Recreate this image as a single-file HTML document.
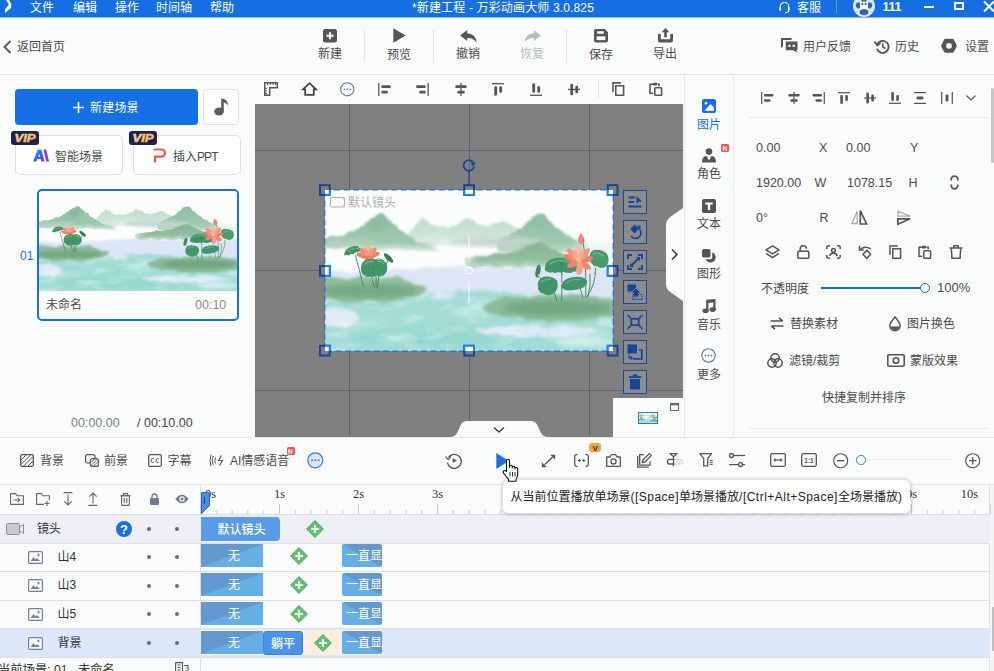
<!DOCTYPE html>
<html lang="zh-CN">
<head>
<meta charset="utf-8">
<title>万彩动画大师</title>
<style>
*{box-sizing:border-box;margin:0;padding:0}
html,body{width:994px;height:671px;overflow:hidden;background:#fafcfc}
body{position:relative;font-family:"Liberation Sans","Noto Sans CJK SC",sans-serif;font-size:12px;color:#444;line-height:1}
.abs,.t,.ic{position:absolute}
.t{white-space:nowrap;line-height:14px;height:14px}
svg{position:absolute;overflow:visible}
/* title bar */
#titlebar{position:absolute;left:0;top:0;width:994px;height:18px;background:linear-gradient(#166fe2 17px,#8ab6f0 17px);color:#fff;overflow:hidden}
#titlebar .t{color:#fff;font-size:12px}
/* toolbar */
#toolbar{position:absolute;left:0;top:18px;width:994px;height:57px;background:#fafcfc;border-bottom:1px solid #e4e7ea}
.vsep{position:absolute;width:1px;background:#e3e5e8}
/* left panel */
#left{position:absolute;left:0;top:75px;width:255px;height:362px;background:#fafcfc}
/* canvas */
#ctool{position:absolute;left:255px;top:75px;width:428px;height:28px;background:#fafcfc}
#canvas{position:absolute;left:255px;top:103px;width:428px;height:334px;background:#808080;overflow:hidden}
.gl{position:absolute;background:#636363}
.hd{position:absolute;width:11px;height:11px;border:2px solid #1d58b8}
.hd.m{border-color:#2a7be6;background:#fff}
.sb{position:absolute;left:368px;width:24px;height:24px;border:1px solid #1b4a9c;background:#8b8c8e}
/* right */
#tabs{position:absolute;left:683px;top:75px;width:51px;height:362px;background:#fafcfc;border-right:1px solid #e6e9ec}
#props{position:absolute;left:734px;top:75px;width:260px;height:362px;background:#fafcfc}
.tab{position:absolute;left:0;width:50px;text-align:center;font-size:12px;color:#555}
/* timeline */
#tl{position:absolute;left:0;top:437px;width:994px;height:234px;background:#fafcfc}
.row{position:absolute;left:0;width:990px;border-bottom:1px solid #dcdfe3}
.blk{position:absolute;height:23px;color:#fff;font-size:12px;text-align:center;line-height:25px;overflow:hidden;white-space:nowrap}
.ls{letter-spacing:.48px}
.dot{position:absolute;width:4px;height:4px;border-radius:50%;background:#666}
</style>
</head>
<body>
<svg width="0" height="0" style="left:0;top:0"><defs>
<filter id="wc" x="-10%" y="-10%" width="120%" height="120%"><feTurbulence type="fractalNoise" baseFrequency="0.09" numOctaves="2" seed="4" result="n"/><feDisplacementMap in="SourceGraphic" in2="n" scale="5" xChannelSelector="R" yChannelSelector="G"/><feGaussianBlur stdDeviation=".9"/></filter>
<filter id="wc2" x="-10%" y="-10%" width="120%" height="120%"><feTurbulence type="fractalNoise" baseFrequency="0.06" numOctaves="2" seed="9" result="n"/><feDisplacementMap in="SourceGraphic" in2="n" scale="8" xChannelSelector="R" yChannelSelector="G"/><feGaussianBlur stdDeviation="1.800"/></filter>
<filter id="b2" x="-20%" y="-20%" width="140%" height="140%"><feGaussianBlur stdDeviation="2.400"/></filter>
<filter id="b3" x="-30%" y="-30%" width="160%" height="160%"><feGaussianBlur stdDeviation="4"/></filter>
<filter id="b0" x="-10%" y="-10%" width="120%" height="120%"><feGaussianBlur stdDeviation=".4"/></filter>
<filter id="lf" x="-10%" y="-10%" width="120%" height="120%"><feTurbulence type="fractalNoise" baseFrequency="0.25" numOctaves="1" seed="2" result="n"/><feDisplacementMap in="SourceGraphic" in2="n" scale="2.200" xChannelSelector="R" yChannelSelector="G"/><feGaussianBlur stdDeviation=".35"/></filter>
<linearGradient id="mg" x1="0" y1="0" x2="0" y2="1"><stop offset="0" stop-color="#8cbe9e"/><stop offset=".75" stop-color="#9fc9ae"/><stop offset="1" stop-color="#bfdccb"/></linearGradient>
<linearGradient id="mg2" x1="0" y1="0" x2="0" y2="1"><stop offset="0" stop-color="#bcdccb"/><stop offset=".7" stop-color="#cfe6da"/><stop offset="1" stop-color="#eaf4ef"/></linearGradient>
<linearGradient id="mg3" x1="0" y1="0" x2="0" y2="1"><stop offset="0" stop-color="#84b492"/><stop offset=".7" stop-color="#93bfa1"/><stop offset="1" stop-color="#c5dccf"/></linearGradient>
<filter id="tx" x="0" y="0" width="100%" height="100%"><feTurbulence type="fractalNoise" baseFrequency="0.03 0.07" numOctaves="3" seed="11"/><feColorMatrix type="matrix" values="0 0 0 0 0.93  0 0 0 0 0.97  0 0 0 0 0.98  0 0 0 2.200 -1.050"/></filter>
<clipPath id="pc"><rect width="288" height="161"/></clipPath>
<symbol id="paint" viewBox="0 0 288 161" preserveAspectRatio="none">
<g clip-path="url(#pc)">
<rect width="288" height="161" fill="#fbfdfc"/>
<!-- distant pale mountains -->
<path d="M80 50 L88 38 L97 26 L105 33 L114 36 L124 38 L134 33 L143 29 L152 34 L162 36 L170 32 L177 31 L186 36 L198 40 L212 48 L212 54 L80 56Z" fill="url(#mg2)" filter="url(#wc)"/>
<!-- right mountain -->
<path d="M172 52 L186 44 L198 37 L208 28 L214 24 L219 24 L224 30 L231 37 L240 43 L250 49 L262 56 L262 62 L172 62Z" fill="url(#mg)" filter="url(#wc)"/>
<!-- left mountain -->
<path d="M-6 50 L10 47 L26 42 L38 35 L48 27 L54 23 L58 23 L63 29 L71 36 L80 43 L92 51 L104 57 L114 62 L60 60 L-6 58Z" fill="url(#mg)" filter="url(#wc)"/>
<ellipse cx="52" cy="36" rx="7" ry="5" fill="#7fb392" opacity=".55" filter="url(#b2)"/>
<!-- grey mist bands -->
<ellipse cx="172" cy="52" rx="46" ry="5" fill="#c6d6d0" opacity=".95" filter="url(#b2)"/>
<ellipse cx="22" cy="53" rx="30" ry="4" fill="#b4d0c0" opacity=".9" filter="url(#b2)"/>
<ellipse cx="96" cy="56" rx="16" ry="3" fill="#a9cbb7" opacity=".9" filter="url(#b2)"/>
<!-- near hill right -->
<path d="M140 68 L156 66 L170 64 L186 62 L198 58 L208 54 L215 52 L222 56 L232 61 L244 66 L254 72 L258 78 L140 78Z" fill="url(#mg3)" filter="url(#wc)"/>
<!-- white mist -->
<ellipse cx="60" cy="68" rx="90" ry="8" fill="#fbfdfc" filter="url(#b3)"/>
<ellipse cx="272" cy="60" rx="22" ry="7" fill="#eef2f4" filter="url(#b3)"/>
<!-- lavender band -->
<path d="M-10 82 L60 80 L120 77 L200 78 L300 74 L300 112 L-10 112Z" fill="#dce6f6" filter="url(#wc2)"/>
<!-- water -->
<path d="M-10 112 L40 110 L96 106 L130 100 L170 102 L300 108 L300 175 L-10 175Z" fill="#a2ddd5" filter="url(#wc2)"/>
<ellipse cx="120" cy="148" rx="100" ry="9" fill="#93d8cf" opacity=".8" filter="url(#b3)"/>
<ellipse cx="212" cy="141" rx="62" ry="6" fill="#dde8f6" filter="url(#wc2)"/>
<ellipse cx="10" cy="128" rx="22" ry="11" fill="#e0e9f6" filter="url(#wc2)"/>
<ellipse cx="118" cy="105" rx="12" ry="4" fill="#e0e9f7" filter="url(#b2)"/>
<ellipse cx="262" cy="152" rx="30" ry="5" fill="#c9ecea" filter="url(#b2)"/>
<rect x="0" y="104" width="288" height="57" filter="url(#tx)" opacity=".55"/>
<!-- left shore -->
<ellipse cx="34" cy="99" rx="68" ry="13" fill="#8fbd9c" filter="url(#wc2)"/>
<ellipse cx="44" cy="101" rx="48" ry="7" fill="#72a782" opacity=".9" filter="url(#b2)"/>
<!-- right shore -->
<ellipse cx="230" cy="118" rx="72" ry="13" fill="#8cbb99" filter="url(#wc2)"/>
<ellipse cx="232" cy="118" rx="54" ry="7.500" fill="#70a580" opacity=".9" filter="url(#b2)"/>
<!-- left lotus -->
<g filter="url(#lf)">
<path d="M30.300 65 Q35 82 38.500 96.500 M46.500 84 Q47 92 49.500 97.500 M51 82 L51.200 97.500 M54 82 Q53.500 92 52.500 97.500 M63 70 Q60 76 58 82" stroke="#3f7f55" stroke-width=".9" fill="none"/>
<path d="M19 65.500 Q19.500 58 28 56.200 Q35.500 55.500 37 61 Q34 60.500 32.500 62.500 Q30 61.800 28.500 64.200 Q25.500 63 24 65.500 Q21.500 64.500 19 65.500Z" fill="#3f9464"/>
<path d="M22 62 Q27 57.500 34 58.500" stroke="#63b082" stroke-width="1.200" fill="none"/>
<path d="M36 80 Q35 71 43.500 68.500 Q48 67.500 50 69.500 Q53.500 67.300 57 69.500 Q62.500 72 62.300 78.500 Q62 84 57 86 Q54 87 52 85.500 Q49 87.500 45 86.500 Q42 88 39.500 85.500 Q36.500 84 36 80Z" fill="#43966a"/>
<path d="M40 74 Q44 70 48.500 72 M52 71.500 Q56 70.500 59 74" stroke="#69b589" stroke-width="1.500" fill="none"/>
<path d="M49.500 70 L48.500 85 M50 76 L41 81 M52 76 L59 82" stroke="#2f7a4b" stroke-width=".6" opacity=".6" fill="none"/>
<ellipse cx="63.5" cy="68" rx="6.2" ry="2.3" transform="rotate(45 63.5 68)" fill="#2d7d4c"/>
<ellipse cx="36.5" cy="65.5" rx="2.2" ry="5.2" transform="rotate(-68 36.5 65.5)" fill="#f08068"/><ellipse cx="49.8" cy="65" rx="2.2" ry="5.2" transform="rotate(66 49.8 65)" fill="#f08068"/><ellipse cx="38.6" cy="62.5" rx="2.6" ry="5.6" transform="rotate(-38 38.6 62.5)" fill="#f28d76"/><ellipse cx="47.6" cy="62.2" rx="2.6" ry="5.6" transform="rotate(36 47.6 62.2)" fill="#f28d76"/><ellipse cx="43" cy="60.6" rx="3.3" ry="6" transform="rotate(0 43 60.6)" fill="#f7b7a6"/><ellipse cx="41" cy="62.5" rx="2" ry="4.6" transform="rotate(-16 41 62.5)" fill="#f59c88"/><ellipse cx="45.2" cy="62.5" rx="2" ry="4.6" transform="rotate(16 45.2 62.5)" fill="#f59c88"/><ellipse cx="43" cy="67.2" rx="6" ry="1.8" transform="rotate(0 43 67.2)" fill="#ef7a64"/>
</g>
<!-- right lotus -->
<g filter="url(#lf)">
<path d="M258.300 54 Q260.500 66 260.500 78 Q261 94 260.800 108 M236.800 80 L236.800 111 M226.500 97 Q230 103 231.700 111 M270.500 78 Q271 94 261.500 107.500 M255 98 Q257 103 257.700 108 M213 86 Q216 90 221 92 M265 84 Q266 96 263 107" stroke="#3f7f55" stroke-width=".9" fill="none"/>
<path d="M219.700 79 Q220 70 230 68.300 Q238 67 245 69.500 Q252.500 72 252.500 79.500 Q250.500 82.500 248 81.500 Q246 84 243 82.500 Q240.500 83.500 238.500 81.500 Q236 83.800 233 82 Q230 84.200 227.500 82 Q224.500 83.500 222.500 81.500 Q220 82 219.700 79Z" fill="#41956a"/>
<path d="M224 74.500 Q230 70 237 70.500 Q244 70.500 249 75" stroke="#66b386" stroke-width="1.600" fill="none"/>
<path d="M236.800 72 L236.800 82 M236.800 74 L226 80 M236.800 74 L247 80" stroke="#2f7a4b" stroke-width=".6" opacity=".6" fill="none"/>
<path d="M264.500 66 Q265 60 271 59.700 Q278 59.500 282 64 Q284.500 68 283 73 Q281.500 77.500 277.500 77.800 Q274.500 78.500 272.500 76.500 Q269 77 267 74 Q264 71 264.500 66Z" fill="#4a9b6c"/>
<path d="M268 64 Q273 61.500 279 66" stroke="#6fb98e" stroke-width="1.400" fill="none"/>
<path d="M212.700 95 Q213 88 220 86.500 Q227 85.800 231.500 90 Q234 94 232 99 Q230 104 225 105 Q221 106 218.500 103.500 Q214.500 103 213.300 99.500Z" fill="#41956a"/>
<path d="M216 92 Q220 88.500 226 89.500" stroke="#66b386" stroke-width="1.400" fill="none"/>
<path d="M236.500 95 Q238 89 246 87.500 Q253 85.800 259 88 Q262.500 89.500 262 92.500 Q261 96.500 256 98.500 Q251 100.500 246 100.300 Q241 101 238 99 Q236 97.500 236.500 95Z" fill="#40936a"/>
<path d="M241 93 Q247 89 255 89.500" stroke="#66b386" stroke-width="1.300" fill="none"/>
<ellipse cx="213" cy="81" rx="2.4" ry="6.6" transform="rotate(12 213 81)" fill="#3a8a56"/>
<path d="M255.500 43.200 Q259.500 46 259.300 51 Q258 55 255 54.300 Q251 50.500 255.500 43.200Z" fill="#f08a78"/><path d="M258.800 48 Q260.300 51 258.500 54.500 Q257.500 52 258.800 48Z" fill="#5aa060"/>
<ellipse cx="245.5" cy="68" rx="3" ry="7" transform="rotate(-70 245.5 68)" fill="#f0806a"/><ellipse cx="262" cy="69.5" rx="3" ry="6.5" transform="rotate(72 262 69.5)" fill="#f0806a"/><ellipse cx="247.5" cy="64.5" rx="3.2" ry="7.5" transform="rotate(-40 247.5 64.5)" fill="#f39480"/><ellipse cx="259.5" cy="64.5" rx="3.2" ry="7.5" transform="rotate(38 259.5 64.5)" fill="#f39480"/><ellipse cx="253.5" cy="62.5" rx="3.8" ry="7.5" transform="rotate(0 253.5 62.5)" fill="#f8bcab"/><ellipse cx="250.8" cy="65.5" rx="2.4" ry="6" transform="rotate(-18 250.8 65.5)" fill="#f6a593"/><ellipse cx="256.4" cy="65.5" rx="2.4" ry="6" transform="rotate(18 256.4 65.5)" fill="#f6a593"/><ellipse cx="248" cy="74" rx="3" ry="6.5" transform="rotate(-118 248 74)" fill="#f1856f"/><ellipse cx="260" cy="75.5" rx="3" ry="6.5" transform="rotate(118 260 75.5)" fill="#f1856f"/><ellipse cx="254.5" cy="79" rx="3.2" ry="6" transform="rotate(8 254.5 79)" fill="#f59e8b"/><ellipse cx="253.300" cy="69.500" rx="2.600" ry="1.900" fill="#f0c070"/>
</g>
</g>
</symbol>
</defs></svg>
<!-- TITLE BAR -->
<div id="titlebar">
<svg style="left:0;top:0" width="14" height="14" viewBox="0 0 14 14"><path d="M6 0 L9 0 L11.200 3.700 L11.200 7.800 L5.100 13 L5.100 9 L8.900 4.800Z" fill="#fff"/></svg>
<div class="t" style="left:30px;top:1px">文件</div>
<div class="t" style="left:73px;top:1px">编辑</div>
<div class="t" style="left:115px;top:1px">操作</div>
<div class="t" style="left:156px;top:1px">时间轴</div>
<div class="t" style="left:210px;top:1px">帮助</div>
<div class="t" style="left:412px;top:1px;letter-spacing:.15px">*新建工程 - 万彩动画大师 3.0.825</div>
<svg style="left:778px;top:1px" width="13" height="13" viewBox="0 0 13 13" fill="none" stroke="#fff" stroke-width="1.1"><path d="M2.2 8 V5.8 A4.3 4.3 0 0 1 10.8 5.8 V8"/><rect x="1.3" y="6.3" width="1.8" height="3.4" rx=".8" fill="#fff" stroke="none"/><rect x="9.9" y="6.3" width="1.8" height="3.4" rx=".8" fill="#fff" stroke="none"/><path d="M10.8 9.5 Q10.6 11.6 7.2 11.8"/></svg>
<div class="t" style="left:797px;top:1px">客服</div>
<div class="abs" style="left:836px;top:0;width:1px;height:13px;background:#5d9bee"></div>
<svg style="left:853px;top:-5px" width="22" height="22" viewBox="0 0 22 22"><circle cx="11" cy="11" r="11" fill="#dfe9f7"/><ellipse cx="11" cy="10" rx="4.2" ry="5" fill="#f4f7fb"/><path d="M2.5 10 Q4 6 7 8 L7 13 Q4 15 2.5 10Z M19.5 10 Q18 6 15 8 L15 13 Q18 15 19.5 10Z" fill="#2d63c7"/><path d="M6.5 16 Q11 12 15.500 16 L15 19 Q11 21 7 19Z" fill="#3a5fae"/><circle cx="9.300" cy="9" r="1" fill="#39424f"/><circle cx="12.700" cy="9" r="1" fill="#39424f"/><path d="M8 5.500 Q11 3 14 5.500 L13 7 Q11 6 9 7Z" fill="#5b6c8c"/></svg>
<div class="t" style="left:882.500px;top:0;font-size:12.500px;font-weight:bold;letter-spacing:-.3px">111</div>
<div class="abs" style="left:924px;top:6px;width:10px;height:2px;background:#fff"></div>
<div class="abs" style="left:954px;top:2px;width:10px;height:8px;border:2px solid #fff"></div>
<svg style="left:983px;top:1px" width="12" height="11" viewBox="0 0 12 11" stroke="#fff" stroke-width="2" fill="none"><path d="M1 0.500 L11 10.500 M11 0.500 L1 10.500"/></svg>
</div>
<!-- TOOLBAR -->
<div id="toolbar">
<svg style="left:3px;top:22px" width="9" height="14" viewBox="0 0 9 14" fill="none" stroke="#555" stroke-width="1.8"><path d="M7.500 1 L1.500 7 L7.500 13"/></svg>
<div class="t" style="left:17px;top:22px;color:#4a4a4a">返回首页</div>
<!-- 新建 -->
<svg style="left:323px;top:11px" width="14" height="14" viewBox="0 0 14 14"><rect x="0" y="0" width="14" height="13.5" rx="2.2" fill="#555"/><path d="M7 3.300 V10.200 M3.500 6.750 H10.500" stroke="#fff" stroke-width="1.900"/></svg>
<div class="t" style="left:318px;top:29px;color:#4a4a4a">新建</div>
<div class="vsep" style="left:364px;top:12px;height:32px"></div>
<!-- 预览 -->
<svg style="left:393px;top:10px" width="13" height="15" viewBox="0 0 13 15"><path d="M0.300 0.300 L12.700 7.500 L0.300 14.700Z" fill="#555"/></svg>
<div class="t" style="left:387px;top:30px;color:#4a4a4a">预览</div>
<div class="vsep" style="left:433px;top:12px;height:32px"></div>
<!-- 撤销 -->
<svg style="left:460px;top:12px" width="17" height="13" viewBox="0 0 17 13"><path d="M7.200 0 L7.200 3.200 Q15.500 3.400 16.800 12.800 Q13.500 7.600 7.200 7.900 L7.200 11 L0 5.500Z" fill="#555"/></svg>
<div class="t" style="left:456px;top:29px;color:#4a4a4a">撤销</div>
<!-- 恢复 -->
<svg style="left:524px;top:12px" width="17" height="13" viewBox="0 0 17 13"><path d="M9.800 0 L9.800 3.200 Q1.500 3.400 0.200 12.800 Q3.500 7.600 9.800 7.900 L9.800 11 L17 5.500Z" fill="#b9bfc0"/></svg>
<div class="t" style="left:520px;top:29px;color:#b4bbbb">恢复</div>
<div class="vsep" style="left:566px;top:12px;height:32px"></div>
<!-- 保存 -->
<svg style="left:594px;top:11px" width="14" height="14" viewBox="0 0 14 14"><path d="M2 0 H10.800 L14 3.200 V11.500 A2 2 0 0 1 12 13.500 H2 A2 2 0 0 1 0 11.500 V2 A2 2 0 0 1 2 0Z" fill="#555"/><rect x="3.200" y="2.200" width="6.600" height="2.600" fill="#fafcfc"/><rect x="2.600" y="7.300" width="8.800" height="3.800" fill="#fafcfc"/></svg>
<div class="t" style="left:589px;top:30px;color:#4a4a4a">保存</div>
<!-- 导出 -->
<svg style="left:658px;top:10px" width="15" height="15" viewBox="0 0 15 15"><path d="M0 6 H2.800 V11.200 H12.200 V6 H15 V12.500 A2 2 0 0 1 13 14.500 H2 A2 2 0 0 1 0 12.500Z" fill="#555"/><path d="M7.500 0 L11.300 4.200 H8.800 V9.300 H6.200 V4.200 H3.700Z" fill="#555"/></svg>
<div class="t" style="left:653px;top:29px;color:#4a4a4a">导出</div>
<!-- 用户反馈 -->
<svg style="left:781px;top:20px" width="17" height="15" viewBox="0 0 17 15"><path d="M0 0 H10.500 V2 H2 V8.500 L0 10.300Z" fill="#555"/><path d="M4.800 3.600 H16.500 V12.200 H15 L16.500 14.800 L12 12.200 H4.800Z" fill="#555"/><rect x="7.300" y="6.800" width="2.200" height="2.100" fill="#fafcfc"/><rect x="11.600" y="6.800" width="2.200" height="2.100" fill="#fafcfc"/></svg>
<div class="t" style="left:803px;top:22px;color:#4a4a4a">用户反馈</div>
<!-- 历史 -->
<svg style="left:874px;top:21px" width="16" height="15" viewBox="0 0 16 15" fill="none" stroke="#555" stroke-width="1.900"><path d="M3.300 5.200 A6 6 0 1 1 3 9.800"/><path d="M0.400 2.600 L3.400 6.400 L6.600 3.600" stroke-width="1.700"/><path d="M8.800 4.200 V7.800 L11.300 9.600" stroke-width="1.600"/></svg>
<div class="t" style="left:895px;top:22px;color:#4a4a4a">历史</div>
<!-- 设置 -->
<svg style="left:941px;top:20px" width="16" height="16" viewBox="0 0 16 16"><path d="M4.600 0.800 H11.400 Q12.300 0.800 12.800 1.600 L15.600 6.900 Q16.100 7.800 15.600 8.700 L12.800 14 Q12.300 14.800 11.400 14.800 H4.600 Q3.700 14.800 3.200 14 L0.400 8.700 Q-0.100 7.800 0.400 6.900 L3.200 1.600 Q3.700 0.800 4.600 0.800Z" fill="#555"/><circle cx="8" cy="7.800" r="2.900" fill="#fafcfc"/></svg>
<div class="t" style="left:965px;top:22px;color:#4a4a4a">设置</div>
</div>
<!-- LEFT PANEL -->
<div id="left">
<div class="abs" style="left:15px;top:14px;width:183px;height:36px;border-radius:4px;background:#156fe5"></div>
<svg style="left:73px;top:27px" width="11" height="11" viewBox="0 0 11 11" stroke="#fff" stroke-width="1.600"><path d="M5.500 0 V11 M0 5.500 H11"/></svg>
<div class="t" style="left:90px;top:26px;color:#fff;letter-spacing:.2px">新建场景</div>
<div class="abs" style="left:203px;top:14px;width:36px;height:36px;border:1px solid #dcdfe2;border-radius:4px;background:#fcfdfd"></div>
<svg style="left:214px;top:23px" width="15" height="18" viewBox="0 0 15 18"><ellipse cx="5" cy="13.500" rx="4.800" ry="4" fill="#5a5c60"/><path d="M7.200 13.500 V0.600 Q13.500 1 14.200 7.200 Q11.500 4.600 9.800 4.600 V13.500Z" fill="#5a5c60"/></svg>
<!-- vip buttons -->
<div class="abs" style="left:15px;top:60px;width:108px;height:40px;border:1px solid #dcdfe2;border-radius:5px;background:#fcfdfd"></div>
<div class="abs" style="left:133px;top:60px;width:108px;height:40px;border:1px solid #dcdfe2;border-radius:5px;background:#fcfdfd"></div>
<svg style="left:11px;top:56px" width="28" height="14" viewBox="0 0 28 14"><defs><linearGradient id="vg" x1="0" y1="0" x2="1" y2="1"><stop offset="0" stop-color="#ffe2a0"/><stop offset="1" stop-color="#e9a948"/></linearGradient></defs><rect width="28" height="14" rx="3" fill="#1d2150"/><text x="14" y="11" text-anchor="middle" font-family="Liberation Sans, sans-serif" font-size="10.800" font-weight="bold" font-style="italic" fill="url(#vg)" stroke="url(#vg)" stroke-width=".5" textLength="21" lengthAdjust="spacingAndGlyphs">VIP</text></svg>
<svg style="left:129px;top:56px" width="28" height="14" viewBox="0 0 28 14"><rect width="28" height="14" rx="3" fill="#1d2150"/><text x="14" y="11" text-anchor="middle" font-family="Liberation Sans, sans-serif" font-size="10.800" font-weight="bold" font-style="italic" fill="url(#vg)" stroke="url(#vg)" stroke-width=".5" textLength="21" lengthAdjust="spacingAndGlyphs">VIP</text></svg>
<svg style="left:33px;top:74px" width="16" height="13" viewBox="0 0 16 13"><defs><linearGradient id="ag" x1="0" y1="0" x2="1" y2="1"><stop offset="0" stop-color="#30b4f5"/><stop offset=".6" stop-color="#3558ea"/><stop offset="1" stop-color="#8a3ff0"/></linearGradient></defs><path d="M4.800 0.500 H8.300 L11.600 12.500 H8.400 L7.800 10 H4.400 L3.300 12.500 H0Z M6.600 5 L5.300 8 H7.300Z" fill="url(#ag)" fill-rule="evenodd"/><path d="M10.500 0.500 H13.200 L16 12.500 H13.200Z" fill="#7b3df0"/></svg>
<div class="t" style="left:55px;top:75px;color:#4a4a4a">智能场景</div>
<svg style="left:153px;top:73px" width="14" height="15" viewBox="0 0 14 15" fill="none" stroke="#f4574f" stroke-width="2.200" stroke-linecap="round" stroke-linejoin="round"><path d="M1.500 1.500 H8.500 A3.500 3.500 0 0 1 8.500 8.600 H2 V13.500"/></svg>
<div class="t" style="left:173px;top:75px;color:#4a4a4a">插入<span style="letter-spacing:-.9px">PPT</span></div>
<!-- scene card -->
<div class="t" style="left:20px;top:174px;color:#1a6fe0;font-size:12px">01</div>
<div class="abs" style="left:37px;top:114px;width:202px;height:132px;border:2px solid #1a6fe0;border-radius:5px;background:#fbfdfd;overflow:hidden">
<svg style="left:0;top:1px" width="198" height="99"><use href="#paint" width="198" height="99"/></svg>
<div class="t" style="left:7px;top:107px;color:#4a4a4a">未命名</div>
<div class="t" style="left:156px;top:107px;color:#8a8a8a;font-size:12.500px">00:10</div>
</div>
<div class="t" style="left:71px;top:341px;color:#7b8391;font-size:12.500px">00:00.00</div>
<div class="t" style="left:137px;top:341px;color:#444;font-size:12.500px">/ 00:10.00</div>
</div>
<!-- CANVAS TOOLBAR -->
<div id="ctool">
<svg style="left:9px;top:7px" width="14" height="14" viewBox="0 0 14 14" fill="none" stroke="#555" stroke-width="1.400"><path d="M0.700 0.700 H13.300 V5.700 H5.700 V13.300 H0.700Z"/><path d="M3.500 0.700 V3 M6.300 0.700 V3 M9.100 0.700 V3 M11.500 0.700 V3 M0.700 6.300 H3 M0.700 9 H3 M0.700 11.500 H3" stroke-width="1"/></svg>
<svg style="left:47px;top:7px" width="15" height="14" viewBox="0 0 15 14" fill="none" stroke="#444" stroke-width="1.800" stroke-linejoin="miter"><path d="M7.500 1.200 L14 7.400 H11.800 V12.800 H3.200 V7.400 H1Z"/></svg>
<svg style="left:85px;top:7px" width="15" height="15" viewBox="0 0 15 15" ><circle cx="7.300" cy="7.300" r="6.600" fill="none" stroke="#656dae" stroke-width="1.100"/><circle cx="4.300" cy="7.300" r=".9" fill="#656dae"/><circle cx="7.300" cy="7.300" r=".9" fill="#656dae"/><circle cx="10.300" cy="7.300" r=".9" fill="#656dae"/></svg>
<svg style="left:123px;top:8px" width="13" height="13" viewBox="0 0 13 13" ><path d="M0.800 0 V13" stroke="#555" stroke-width="1.300"/><rect x="3.300" y="2.300" width="9.500" height="2.800" rx="1.200" fill="#555"/><rect x="3.300" y="7.800" width="6.500" height="2.800" rx="1.200" fill="#555"/></svg>
<svg style="left:161px;top:8px" width="13" height="13" viewBox="0 0 13 13" ><path d="M12.200 0 V13" stroke="#555" stroke-width="1.300"/><rect x="0.200" y="2.300" width="9.500" height="2.800" rx="1.200" fill="#555"/><rect x="3.200" y="7.800" width="6.500" height="2.800" rx="1.200" fill="#555"/></svg>
<svg style="left:200px;top:8px" width="12" height="13" viewBox="0 0 12 13" ><path d="M6 0 V13" stroke="#555" stroke-width="1.300"/><rect x="0.300" y="2.300" width="11.400" height="2.800" rx="1.200" fill="#555"/><rect x="2.300" y="7.800" width="7.400" height="2.800" rx="1.200" fill="#555"/></svg>
<svg style="left:237px;top:8px" width="12" height="13" viewBox="0 0 12 13" ><path d="M0 0.700 H12" stroke="#555" stroke-width="1.300"/><rect x="2.300" y="3.300" width="2.800" height="9.400" rx="1.200" fill="#555"/><rect x="7.300" y="3.300" width="2.800" height="6.400" rx="1.200" fill="#555"/></svg>
<svg style="left:275px;top:8px" width="12" height="13" viewBox="0 0 12 13" ><path d="M0 12.300 H12" stroke="#555" stroke-width="1.300"/><rect x="2.300" y="0.300" width="2.800" height="9.400" rx="1.200" fill="#555"/><rect x="7.300" y="3.300" width="2.800" height="6.400" rx="1.200" fill="#555"/></svg>
<svg style="left:313px;top:8px" width="12" height="13" viewBox="0 0 12 13" ><path d="M0 6.500 H12" stroke="#555" stroke-width="1.300"/><rect x="2.300" y="0.800" width="2.800" height="11.400" rx="1.200" fill="#555"/><rect x="7.300" y="2.800" width="2.800" height="7.400" rx="1.200" fill="#555"/></svg>
<div class="vsep" style="left:343px;top:5px;height:18px;background:#e1e4e7"></div>
<svg style="left:357px;top:7px" width="13" height="14" viewBox="0 0 13 14" fill="none" stroke="#555" stroke-width="1.600"><path d="M3.800 3.800 H11.600 V13.200 H3.800Z"/><path d="M1 10 V0.900 H8.800"/></svg>
<svg style="left:394px;top:7px" width="14" height="14" viewBox="0 0 14 14" fill="none" stroke="#555" stroke-width="1.600"><path d="M4 2.300 H1 V11.300 H4.200"/><path d="M8.800 2.300 H10.200 V4.300"/><rect x="3.800" y="0.800" width="4.600" height="2.600" rx=".8" fill="#555" stroke="none"/><rect x="5.800" y="5.800" width="6.800" height="7.400" rx=".8"/></svg>
</div>
<!-- CANVAS -->
<div id="canvas">
<div class="gl" style="left:94px;top:0;width:1px;height:334px"></div>
<div class="gl" style="left:214px;top:0;width:1px;height:334px"></div>
<div class="gl" style="left:334px;top:0;width:1px;height:334px"></div>
<div class="gl" style="left:0;top:47px;width:428px;height:1px"></div>
<div class="gl" style="left:0;top:167px;width:428px;height:1px"></div>
<div class="gl" style="left:0;top:287px;width:428px;height:1px"></div>
<svg style="left:70px;top:87px" width="288" height="161"><use href="#paint" width="288" height="161"/></svg>
<svg style="left:75px;top:94px" width="16" height="11" viewBox="0 0 16 11" fill="none" stroke="#adb0b0" stroke-width="1"><rect x="0.500" y="0.500" width="14" height="9.500" rx="1.300"/><path d="M14.500 0.700 L12.800 2.600 M14.500 9.800 L12.800 7.900"/></svg>
<div class="t" style="left:93px;top:93px;color:#aeb1b1;letter-spacing:0">默认镜头</div>
<svg style="left:204px;top:130px" width="20" height="74" viewBox="0 0 20 74"><path d="M10 3 V27 M10 49 V70" stroke="#fff" stroke-opacity=".75" stroke-width="1.300"/><circle cx="10" cy="37.500" r="3.600" fill="none" stroke="#fff" stroke-opacity=".8" stroke-width="1.500"/><path d="M-6 37.500 H4 M16 37.500 H34" stroke="#fff" stroke-opacity=".35" stroke-width="1"/></svg>
<svg style="left:0;top:0" width="428" height="334" viewBox="0 0 428 334"><defs><clipPath id="imc"><rect x="70" y="87" width="288" height="161"/></clipPath></defs><rect x="69.700" y="86.700" width="288.600" height="161.600" fill="none" stroke="#2a72da" stroke-width="1.400" stroke-dasharray="6 3.500"/><rect x="65.0" y="82.2" width="9.700" height="9.700" fill="#808080" stroke="#10479c" stroke-width="2"/><rect x="209.3" y="82.2" width="9.700" height="9.700" fill="#808080" stroke="#10479c" stroke-width="2"/><rect x="352.8" y="82.2" width="9.700" height="9.700" fill="#808080" stroke="#10479c" stroke-width="2"/><rect x="65.0" y="163.0" width="9.700" height="9.700" fill="#808080" stroke="#10479c" stroke-width="2"/><rect x="352.8" y="163.0" width="9.700" height="9.700" fill="#808080" stroke="#10479c" stroke-width="2"/><rect x="65.0" y="242.8" width="9.700" height="9.700" fill="#808080" stroke="#10479c" stroke-width="2"/><rect x="209.3" y="242.8" width="9.700" height="9.700" fill="#808080" stroke="#10479c" stroke-width="2"/><rect x="352.8" y="242.8" width="9.700" height="9.700" fill="#808080" stroke="#10479c" stroke-width="2"/><g clip-path="url(#imc)"><rect x="65.0" y="82.2" width="9.700" height="9.700" fill="#ffffff" stroke="#1e80f8" stroke-width="2"/><rect x="209.3" y="82.2" width="9.700" height="9.700" fill="#ffffff" stroke="#1e80f8" stroke-width="2"/><rect x="352.8" y="82.2" width="9.700" height="9.700" fill="#ffffff" stroke="#1e80f8" stroke-width="2"/><rect x="65.0" y="163.0" width="9.700" height="9.700" fill="#ffffff" stroke="#1e80f8" stroke-width="2"/><rect x="352.8" y="163.0" width="9.700" height="9.700" fill="#ffffff" stroke="#1e80f8" stroke-width="2"/><rect x="65.0" y="242.8" width="9.700" height="9.700" fill="#ffffff" stroke="#1e80f8" stroke-width="2"/><rect x="209.3" y="242.8" width="9.700" height="9.700" fill="#ffffff" stroke="#1e80f8" stroke-width="2"/><rect x="352.8" y="242.8" width="9.700" height="9.700" fill="#ffffff" stroke="#1e80f8" stroke-width="2"/></g></svg>
<svg style="left:206px;top:55px" width="16" height="28" viewBox="0 0 16 28" fill="none" stroke="#10479c" stroke-width="1.800"><path d="M12.500 4.800 A5.300 5.300 0 1 0 13.200 8.200"/><path d="M10.200 3.200 L14.800 5.600 L10.800 8.200Z" fill="#10479c" stroke="none"/><path d="M8 13.500 V28" stroke-width="1.200"/></svg>
<div class="sb" style="top:87px"><svg style="left:3px;top:3px" width="16" height="16" viewBox="0 0 16 16"><path d="M1.500 3.500 H8 M1.500 8 H7 M1.500 12.500 H14.500" stroke="#17459a" stroke-width="1.800"/><path d="M9.500 2 L15 7.200 L12 7.800 L9.500 10Z" fill="#17459a"/></svg></div>
<div class="sb" style="top:117px"><svg style="left:3px;top:3px" width="16" height="16" viewBox="0 0 16 16"><path d="M13 6 A5.200 5.200 0 1 1 4 12" fill="none" stroke="#17459a" stroke-width="1.600"/><path d="M7.600 0.500 L12 5 L7.600 9.500 L3.200 5Z" fill="#17459a"/><path d="M9.800 1 L14 2.200 L12.600 6Z" fill="#17459a"/></svg></div>
<div class="sb" style="top:147px"><svg style="left:3px;top:3px" width="16" height="16" viewBox="0 0 16 16"><path d="M1 5 V1 H5 M11 1 H15 V5 M15 11 V15 H11 M5 15 H1 V11" fill="none" stroke="#17459a" stroke-width="1.800"/><path d="M3.500 12.500 L12.500 3.500" stroke="#17459a" stroke-width="1.800"/><path d="M9 3 H13 V7Z M3 9 V13 H7Z" fill="#17459a"/></svg></div>
<div class="sb" style="top:177px"><svg style="left:3px;top:3px" width="16" height="16" viewBox="0 0 16 16"><rect x="0.500" y="0.500" width="8.500" height="7" fill="#17459a"/><path d="M9 4 L14 9 H11.500 V13 H6.500 V9 H4Z" fill="#17459a" stroke="#8a8d92" stroke-width=".8"/><path d="M6 10.500 H15 V15.300 H6Z" fill="none" stroke="#17459a" stroke-width="1.200" stroke-dasharray="1.500 1"/></svg></div>
<div class="sb" style="top:207px"><svg style="left:3px;top:3px" width="16" height="16" viewBox="0 0 16 16"><rect x="4.300" y="4.800" width="7.400" height="6.400" fill="none" stroke="#17459a" stroke-width="1.800"/><path d="M0.500 1 L3.500 4 M15.500 1 L12.500 4 M0.500 15 L3.500 12 M15.500 15 L12.500 12" stroke="#17459a" stroke-width="1.400"/><path d="M1.500 4.300 H3.800 V2Z M14.500 4.300 H12.200 V2Z M1.500 11.700 H3.800 V14Z M14.500 11.700 H12.200 V14Z" fill="#17459a"/></svg></div>
<div class="sb" style="top:237px"><svg style="left:3px;top:3px" width="16" height="16" viewBox="0 0 16 16"><rect x="0.500" y="0.500" width="9.500" height="9" fill="#17459a"/><path d="M12 6 H14.800 V14.800 H6 " fill="none" stroke="#17459a" stroke-width="1.700"/><path d="M2 10.500 V14 H5 M3.600 12.400 L5.200 14 L3.600 15.600" fill="none" stroke="#17459a" stroke-width="1.200"/></svg></div>
<div class="sb" style="top:267px"><svg style="left:3px;top:3px" width="16" height="16" viewBox="0 0 16 16"><path d="M3 5 H13 V15.500 H3Z" fill="#17459a"/><rect x="1.800" y="2.200" width="12.400" height="1.800" fill="#17459a"/><rect x="5.800" y="0.500" width="4.400" height="2" fill="#17459a"/></svg></div>
<svg style="left:410px;top:105px" width="18" height="93" viewBox="0 0 18 93"><path d="M18 0 L18 93 L6 84.500 Q1 81.500 1 76 L1 17 Q1 11.500 6 8.500Z" fill="#fafcfc"/><path d="M7 41.500 L12 46.500 L7 51.500" fill="none" stroke="#444" stroke-width="1.700"/></svg>
<div class="abs" style="left:358px;top:295px;width:70px;height:39px;background:#fafcfc"></div>
<svg style="left:383px;top:309px" width="20" height="12"><use href="#paint" width="20" height="12"/><rect x="0.500" y="0.500" width="19" height="11" fill="none" stroke="#2f73d8" stroke-width="1"/></svg>
<svg style="left:415px;top:300px" width="9" height="8" viewBox="0 0 9 8"><rect x="0.500" y="0.500" width="8" height="7" fill="#fff" stroke="#62666d" stroke-width="1"/><rect x="0.500" y="0.500" width="8" height="1.800" fill="#62666d"/></svg>
<svg style="left:196px;top:317px" width="96" height="17" viewBox="0 0 96 17"><path d="M0 17 Q4 16.500 6 13 L10 4.500 Q12 1 16 1 L80 1 Q84 1 86 4.500 L90 13 Q92 16.500 96 17Z" fill="#fafcfc"/><path d="M43 7.500 L48 12 L53 7.500" fill="none" stroke="#444" stroke-width="1.600"/></svg>
<div class="abs" style="left:0;top:0;width:428px;height:1px;background:#fafcfc"></div>
</div>
<!-- RIGHT TABS -->
<div id="tabs">
<div class="abs" style="left:1px;top:0;width:1px;height:362px;background:#e4e7ea"></div>
<svg style="left:19px;top:24px" width="14" height="14" viewBox="0 0 14 14"><rect width="14" height="14" rx="2" fill="#1a6fe0"/><circle cx="4" cy="4.300" r="1.300" fill="#fff"/><path d="M2.500 11.800 L8.600 5 L12 8.800 V11.800Z" fill="#fff"/></svg>
<div class="t" style="left:14px;top:43px;color:#1a6fe0">图片</div>
<svg style="left:19px;top:73px" width="14" height="15" viewBox="0 0 14 15"><circle cx="7" cy="3.600" r="3.300" fill="#555"/><path d="M0 14.500 Q0 8.500 4.500 7.800 L7 12.500 L9.500 7.800 Q14 8.500 14 14.500Z" fill="#555"/></svg>
<div class="abs" style="left:38px;top:69px;width:8px;height:8px;border-radius:1.500px;background:#f0524f"></div><div class="t" style="left:39.500px;top:69.500px;font-size:6.500px;line-height:7px;height:7px;color:#fff;font-weight:bold">N</div>
<div class="t" style="left:14px;top:92px;color:#4a4a4a">角色</div>
<svg style="left:19px;top:124px" width="14" height="14" viewBox="0 0 14 14"><rect width="14" height="14" rx="2" fill="#555"/><path d="M3.300 3.500 H10.700 V5.600 H8.200 V11 H5.800 V5.600 H3.300Z" fill="#fff"/></svg>
<div class="t" style="left:14px;top:142px;color:#4a4a4a">文本</div>
<svg style="left:19px;top:174px" width="14" height="14" viewBox="0 0 14 14"><rect x="0" y="0" width="8.500" height="8.500" rx="1.800" fill="#555"/><path d="M10.200 3.400 A5.200 5.200 0 1 1 3.600 10.200 L8.400 10.200 Q10.200 10.200 10.200 8.400Z" fill="#555"/></svg>
<div class="t" style="left:14px;top:192px;color:#4a4a4a">图形</div>
<svg style="left:19px;top:224px" width="14" height="14" viewBox="0 0 14 14"><path d="M4.200 0.800 L13.500 0 V10.800 H11.300 V3.400 L6.400 3.900 V12 H4.200Z" fill="#555"/><ellipse cx="3.600" cy="11.800" rx="3.200" ry="2.300" fill="#555"/><ellipse cx="10.700" cy="10.600" rx="3.200" ry="2.300" fill="#555"/></svg>
<div class="t" style="left:14px;top:243px;color:#4a4a4a">音乐</div>
<svg style="left:18px;top:273px" width="15" height="15" viewBox="0 0 15 15"><circle cx="7.500" cy="7.500" r="6.700" fill="none" stroke="#656dae" stroke-width="1.100"/><circle cx="4.500" cy="7.500" r=".9" fill="#656dae"/><circle cx="7.500" cy="7.500" r=".9" fill="#656dae"/><circle cx="10.500" cy="7.500" r=".9" fill="#656dae"/></svg>
<div class="t" style="left:14px;top:293px;color:#4a4a4a">更多</div>
</div>
<!-- PROPS -->
<div id="props">
<svg style="left:27px;top:17px" width="13" height="12" viewBox="0 0 13 12" ><path d="M0.700 0 V12" stroke="#555" stroke-width="1.200"/><rect x="3" y="2" width="9.500" height="2.600" rx="1.100" fill="#555"/><rect x="3" y="7.200" width="6.500" height="2.600" rx="1.100" fill="#555"/></svg>
<svg style="left:53.5px;top:17px" width="12" height="12" viewBox="0 0 12 12" ><path d="M6 0 V12" stroke="#555" stroke-width="1.200"/><rect x="0.300" y="2" width="11.400" height="2.600" rx="1.100" fill="#555"/><rect x="2.300" y="7.200" width="7.400" height="2.600" rx="1.100" fill="#555"/></svg>
<svg style="left:78px;top:17px" width="13" height="12" viewBox="0 0 13 12" ><path d="M12.300 0 V12" stroke="#555" stroke-width="1.200"/><rect x="0.500" y="2" width="9.500" height="2.600" rx="1.100" fill="#555"/><rect x="3.500" y="7.200" width="6.500" height="2.600" rx="1.100" fill="#555"/></svg>
<svg style="left:104px;top:17px" width="12" height="12" viewBox="0 0 12 12" ><path d="M0 0.700 H12" stroke="#555" stroke-width="1.200"/><rect x="2.300" y="3" width="2.600" height="9" rx="1.100" fill="#555"/><rect x="7.300" y="3" width="2.600" height="6" rx="1.100" fill="#555"/></svg>
<svg style="left:129.5px;top:17px" width="12" height="12" viewBox="0 0 12 12" ><path d="M0 6 H12" stroke="#555" stroke-width="1.200"/><rect x="2.300" y="0.500" width="2.600" height="11" rx="1.100" fill="#555"/><rect x="7.300" y="2.500" width="2.600" height="7" rx="1.100" fill="#555"/></svg>
<svg style="left:155px;top:17px" width="12" height="12" viewBox="0 0 12 12" ><path d="M0 11.300 H12" stroke="#555" stroke-width="1.200"/><rect x="2.300" y="0" width="2.600" height="9" rx="1.100" fill="#555"/><rect x="7.300" y="3" width="2.600" height="6" rx="1.100" fill="#555"/></svg>
<svg style="left:180px;top:17px" width="12" height="12" viewBox="0 0 12 12" ><path d="M0 0.700 H12 M0 11.300 H12" stroke="#555" stroke-width="1.200"/><rect x="2.500" y="4.600" width="7" height="2.800" rx="1.100" fill="#555"/></svg>
<svg style="left:206.5px;top:17px" width="12" height="12" viewBox="0 0 12 12" ><path d="M0.700 0 V12 M11.300 0 V12" stroke="#555" stroke-width="1.200"/><rect x="4.600" y="2.500" width="2.800" height="7" rx="1.100" fill="#555"/></svg>
<svg style="left:232px;top:20px" width="10" height="6" viewBox="0 0 10 6" ><path d="M0.500 0.500 L5 5 L9.500 0.500" fill="none" stroke="#555" stroke-width="1.200"/></svg>
<div class="abs" style="left:15px;top:42px;width:239px;height:1px;background:#e6e9ec"></div>
<div class="abs" style="left:257px;top:13px;width:3px;height:75px;background:#c4c6c8;border-radius:1.500px"></div>
<div class="t" style="left:22px;top:66px;font-size:12.500px;color:#4a4a4a;">0.00</div>
<div class="t" style="left:85px;top:66px;font-size:12.500px;color:#4a4a4a;">X</div>
<div class="t" style="left:112px;top:66px;font-size:12.500px;color:#4a4a4a;">0.00</div>
<div class="t" style="left:176px;top:66px;font-size:12.500px;color:#4a4a4a;">Y</div>
<div class="t" style="left:22px;top:101px;font-size:12.500px;color:#4a4a4a;">1920.00</div>
<div class="t" style="left:80.5px;top:101px;font-size:12.500px;color:#4a4a4a;">W</div>
<div class="t" style="left:113px;top:101px;font-size:12.500px;color:#4a4a4a;">1078.15</div>
<div class="t" style="left:174.5px;top:101px;font-size:12.500px;color:#4a4a4a;">H</div>
<svg style="left:215.5px;top:100px" width="9" height="15" viewBox="0 0 9 15" ><path d="M1.200 5.500 V4.500 A3.300 3.300 0 0 1 7.800 4.500 V5.500 M1.200 9.500 V10.500 A3.300 3.300 0 0 0 7.800 10.500 V9.500" fill="none" stroke="#555" stroke-width="1.700"/></svg>
<div class="t" style="left:22px;top:136px;font-size:12.500px;color:#4a4a4a;">0°</div>
<div class="t" style="left:85.5px;top:136px;font-size:12.500px;color:#4a4a4a;">R</div>
<svg style="left:117px;top:135px" width="16" height="15" viewBox="0 0 16 15" ><path d="M6.200 1.500 V13.500 H0.800Z" fill="none" stroke="#a9adad" stroke-width="1.300"/><path d="M9.300 0.500 V14 H15.500Z" fill="none" stroke="#555" stroke-width="1.700"/></svg>
<svg style="left:163px;top:135px" width="14" height="15" viewBox="0 0 14 15" ><path d="M1 6.200 H13 L1 1.200Z" fill="none" stroke="#a9adad" stroke-width="1.300"/><path d="M0.900 8.800 H13.200 L0.900 14.300Z" fill="none" stroke="#555" stroke-width="1.700"/></svg>
<svg style="left:30.5px;top:170px" width="15" height="14" viewBox="0 0 15 14" fill="none" stroke="#555" stroke-width="1.500" stroke-linejoin="round"><path d="M7.500 0.800 L14 4.800 L7.500 8.800 L1 4.800Z"/><path d="M1.200 8.400 L7.500 12.600 L13.800 8.400"/></svg>
<svg style="left:62.5px;top:170px" width="13" height="14" viewBox="0 0 13 14" fill="none" stroke="#555" stroke-width="1.500"><rect x="0.800" y="6.200" width="11" height="7" rx="1"/><path d="M3.200 6 V4 A3.100 3.100 0 0 1 9.400 3.600"/></svg>
<svg style="left:91.5px;top:170px" width="15" height="14" viewBox="0 0 15 14" fill="none" stroke="#555" stroke-width="1.500"><path d="M0.800 4 V2.500 Q0.800 0.800 2.500 0.800 H4 M11 0.800 H12.500 Q14.200 0.800 14.200 2.500 V4 M14.200 10 V11.500 Q14.200 13.200 12.500 13.200 H11 M4 13.200 H2.500 Q0.800 13.200 0.800 11.500 V10"/><circle cx="7.500" cy="5.500" r="1.900"/><path d="M3.800 11 Q4.300 8.300 7.500 8.300 Q10.700 8.300 11.200 11"/></svg>
<svg style="left:123.5px;top:170px" width="15" height="14" viewBox="0 0 15 14" fill="none" stroke="#555" stroke-width="1.500"><path d="M2.500 4.300 Q7 0.500 12.800 3.800"/><path d="M1.500 0.800 V5 H5.800" /><path d="M8.800 5.300 L12.600 9.300 L8.800 13.300 L5 9.300Z"/></svg>
<svg style="left:155px;top:170px" width="13" height="14" viewBox="0 0 13 14" fill="none" stroke="#555" stroke-width="1.500"><path d="M3.800 3.800 H11.600 V13.200 H3.800Z"/><path d="M1 10 V0.900 H8.800"/></svg>
<svg style="left:183.5px;top:170px" width="14" height="14" viewBox="0 0 14 14" fill="none" stroke="#555" stroke-width="1.500"><path d="M4 2.300 H1 V11.300 H4.200"/><path d="M8.800 2.300 H10.200 V4.300"/><rect x="3.800" y="0.800" width="4.600" height="2.600" rx=".8" fill="#555" stroke="none"/><rect x="5.800" y="5.800" width="6.800" height="7.400" rx=".8"/></svg>
<svg style="left:215px;top:170px" width="14" height="14" viewBox="0 0 14 14" fill="none" stroke="#555" stroke-width="1.500"><path d="M0.500 3 H13.500 M4.800 2.800 V0.800 H9.200 V2.800"/><path d="M2.300 3.200 L3 13.200 H11 L11.700 3.200"/></svg>
<div class="t" style="left:27px;top:207px;color:#4a4a4a">不透明度</div>
<div class="abs" style="left:87px;top:212px;width:100px;height:2px;background:#1a6fe0"></div>
<div class="abs" style="left:186px;top:208px;width:10px;height:10px;border-radius:50%;border:1.500px solid #1a6fe0;background:#fff"></div>
<div class="t" style="left:203px;top:206px;font-size:12.500px;color:#4a4a4a;font-size:13px;">100%</div>
<svg style="left:36px;top:242px" width="14" height="13" viewBox="0 0 14 13" ><path d="M0.500 4 H12.500 M9 0.800 L12.800 4.200 M13.500 9 H1.500 M5 12.200 L1.200 8.800" fill="none" stroke="#555" stroke-width="1.600"/></svg>
<div class="t" style="left:56px;top:242px;color:#4a4a4a">替换素材</div>
<svg style="left:155px;top:241px" width="12" height="15" viewBox="0 0 12 15" ><path d="M6 1 Q11.200 7 11.200 9.600 A5.200 5.200 0 0 1 0.800 9.600 Q0.800 7 6 1Z" fill="none" stroke="#555" stroke-width="1.500"/><path d="M1.400 10.500 H10.600 A4.800 4.800 0 0 1 1.400 10.500Z" fill="#555"/></svg>
<div class="t" style="left:173px;top:242px;color:#4a4a4a">图片换色</div>
<svg style="left:33px;top:278px" width="16" height="15" viewBox="0 0 16 15" fill="none" stroke="#555" stroke-width="1.500"><circle cx="8" cy="5" r="4.200"/><circle cx="5" cy="10" r="4.200"/><circle cx="11" cy="10" r="4.200"/></svg>
<div class="t" style="left:55px;top:279px;color:#4a4a4a">滤镜/裁剪</div>
<svg style="left:152.5px;top:279px" width="18" height="13" viewBox="0 0 18 13" fill="none" stroke="#555" stroke-width="1.600"><rect x="0.800" y="0.800" width="16.400" height="11.400" rx="1"/><circle cx="9" cy="6.500" r="2.800"/></svg>
<div class="t" style="left:176px;top:279px;color:#4a4a4a">蒙版效果</div>
<div class="t" style="left:88px;top:316px;color:#4a4a4a">快捷复制并排序</div>
<div class="abs" style="left:15px;top:353px;width:239px;height:1px;background:#e6e9ec"></div>
</div>
<!-- TIMELINE -->
<div id="tl">
<div class="abs" style="left:0px;top:0px;width:994px;height:1px;background:#e3e6e9"></div>
<svg style="left:20px;top:17px" width="14" height="13" viewBox="0 0 14 13" fill="none" stroke="#555" stroke-width="1.300"><rect x="0.700" y="0.700" width="12.600" height="11.600" rx="1.500"/><path d="M1 6 L6 1 M1 10.500 L10.500 1 M3.500 12 L13 2.500 M8 12 L13 7" stroke-width="1"/></svg>
<div class="t" style="left:40px;top:17px;color:#4a4a4a">背景</div>
<svg style="left:84.5px;top:17px" width="14" height="13" viewBox="0 0 14 13" fill="none" stroke="#555" stroke-width="1.200"><rect x="0.600" y="0.600" width="9.400" height="8.400" rx="2"/><rect x="5.400" y="4.600" width="8" height="7.800" rx="2" fill="#fafcfc"/><path d="M6.500 11 L12 5.500 M8.500 12 L13 7.500 M6 8.500 L9.500 5" stroke-width=".9"/></svg>
<div class="t" style="left:104px;top:17px;color:#4a4a4a">前景</div>
<svg style="left:147.5px;top:17px" width="14" height="13" viewBox="0 0 14 13" fill="none" stroke="#555" stroke-width="1.300"><rect x="0.700" y="0.700" width="12.600" height="11.600" rx="1.500"/><path d="M6 5.200 Q5.300 4.500 4.500 4.500 Q3 4.500 3 6.500 Q3 8.500 4.500 8.500 Q5.300 8.500 6 7.800 M11 5.200 Q10.300 4.500 9.500 4.500 Q8 4.500 8 6.500 Q8 8.500 9.500 8.500 Q10.300 8.500 11 7.800" stroke-width="1"/></svg>
<div class="t" style="left:167.5px;top:17px;color:#4a4a4a">字幕</div>
<svg style="left:209.5px;top:17px" width="15" height="13" viewBox="0 0 15 13" fill="none" stroke="#555" stroke-width="1.300"><path d="M5.500 3.500 Q4.200 6.500 5.500 9.500 M3.200 2 Q1.200 6.500 3.200 11 M1 0.800 Q-1 6.500 1 12.200" stroke-width="1"/><path d="M11.500 1.500 L8.500 6.500 H12.500 L9.500 11.500" stroke-width="1.200"/></svg>
<div class="t" style="left:230px;top:17px;color:#4a4a4a">AI情感语音</div>
<div class="abs" style="left:286.5px;top:10px;width:8px;height:8px;border-radius:1.500px;background:#f0524f"></div>
<div class="t" style="left:288px;top:10.5px;font-size:6.500px;line-height:7px;height:7px;color:#fff;font-weight:bold">N</div>
<svg style="left:307px;top:15px" width="17" height="17" viewBox="0 0 17 17" ><circle cx="8.300" cy="8.300" r="7.500" fill="#dbe8fb" stroke="#2f78e2" stroke-width="1.200"/><circle cx="5" cy="8.300" r="1" fill="#2f78e2"/><circle cx="8.300" cy="8.300" r="1" fill="#2f78e2"/><circle cx="11.600" cy="8.300" r="1" fill="#2f78e2"/></svg>
<svg style="left:444.5px;top:16px" width="18" height="16" viewBox="0 0 18 16" fill="none" stroke="#555" stroke-width="1.400"><path d="M3.600 4.300 A7 7 0 1 1 2.400 9.500"/><path d="M0.500 3.600 L3.300 6.600 L5.900 3.400" stroke-width="1.300"/><path d="M7.600 5.200 L12 7.600 L7.600 10Z" fill="#555" stroke="none"/></svg>
<svg style="left:496px;top:16px" width="13" height="16" viewBox="0 0 13 16" ><path d="M0.300 0 L12.800 8 L0.300 16Z" fill="#1a6fe0"/></svg>
<svg style="left:540.5px;top:17px" width="15" height="14" viewBox="0 0 15 14"><path d="M3.500 10.800 L11.500 3.200" stroke="#555" stroke-width="1.300"/><path d="M9.200 0.800 H14.200 V5.800Z M0.800 8.200 V13.200 H5.800Z" fill="#555"/></svg>
<svg style="left:574px;top:17px" width="15" height="13" viewBox="0 0 15 13" fill="none" stroke="#555" stroke-width="1.300"><path d="M3.500 0.700 H2.500 Q0.700 0.700 0.700 2.500 V10.500 Q0.700 12.300 2.500 12.300 H3.500 M11.500 0.700 H12.500 Q14.300 0.700 14.300 2.500 V10.500 Q14.300 12.300 12.500 12.300 H11.500"/><path d="M3.800 6.500 H6.800 M5.300 5 V8 M8.200 6.500 H11.200 M9.700 5 V8" stroke-width="1"/></svg>
<div class="abs" style="left:589px;top:6px;width:12px;height:9px;border-radius:3px;background:#f2a443"></div>
<div class="t" style="left:592.5px;top:6.5px;font-size:8px;line-height:9px;height:9px;color:#3a2a10;font-weight:bold">V</div>
<svg style="left:605.5px;top:17px" width="15" height="13" viewBox="0 0 15 13" fill="none" stroke="#555" stroke-width="1.300"><path d="M0.700 3 H4 L5.300 0.700 H9.700 L11 3 H14.300 V12.300 H0.700Z" stroke-linejoin="round"/><circle cx="7.500" cy="7.400" r="2.600"/></svg>
<svg style="left:636.5px;top:15.5px" width="15" height="15" viewBox="0 0 15 15" fill="none" stroke="#555" stroke-width="1.300"><path d="M0.700 3 V14.100 H11.800"/><path d="M6.800 1.700 H2.700 V12.100 H13.100 V8.200"/><path d="M5.300 9.600 L5.900 7 L12.300 0.600 L14.300 2.600 L7.900 9 Z" stroke-linejoin="round"/></svg>
<svg style="left:667px;top:16px" width="17" height="15" viewBox="0 0 17 15" fill="none" stroke="#555" stroke-width="1.300"><path d="M2.900 0.600 H10.100 L6.500 3.800Z M6.500 3.800 V13.600" stroke-linejoin="round"/><path d="M7.500 6.400 H2.600 Q0.400 6.400 0.400 8.700 Q0.400 11 2.600 11 H7.500"/><path d="M7.500 6.400 H13.800 Q16 6.400 16 8.700 Q16 11 13.800 11 H7.500 M9 10.600 L11.300 6.800 M11.800 10.600 L14.100 6.800" stroke="#cfd2d2" stroke-width="1"/></svg>
<svg style="left:698.5px;top:16px" width="15" height="15" viewBox="0 0 15 15" fill="none" stroke="#555" stroke-width="1.300"><path d="M0.800 0.600 H12.600 L8.700 5.300 V12.900 H4.700 V5.300Z" stroke-linejoin="round"/><path d="M10.600 7.400 H13.800 M10.600 9.400 H13.800 M10.600 11.400 H13.800" stroke-width="1"/></svg>
<svg style="left:729px;top:16px" width="17" height="15" viewBox="0 0 17 15" fill="none" stroke="#555" stroke-width="1.300"><circle cx="2.500" cy="2.500" r="2"/><path d="M4.500 2.500 H16.100"/><circle cx="11.500" cy="11.600" r="2"/><path d="M0.100 11.600 H9.500 M13.500 11.600 H16.100"/></svg>
<svg style="left:770px;top:16px" width="16" height="14" viewBox="0 0 16 14" fill="none" stroke="#555" stroke-width="1.300"><rect x="0.700" y="0.700" width="14.600" height="12.600" rx="1.500"/><path d="M5 7 H11" stroke-width="1.200"/><path d="M5.500 4.800 L3.300 7 L5.500 9.200Z M10.500 4.800 L12.700 7 L10.500 9.200Z" fill="#555" stroke="none"/></svg>
<svg style="left:801px;top:16px" width="16" height="14" viewBox="0 0 16 14" fill="none" stroke="#555" stroke-width="1.300"><rect x="0.700" y="0.700" width="14.600" height="12.600" rx="1.500"/><text x="8" y="9.800" font-size="6.500" text-anchor="middle" fill="#555" stroke="none" font-family="Liberation Sans, sans-serif" font-weight="bold">1:1</text></svg>
<svg style="left:833px;top:16px" width="16" height="16" viewBox="0 0 16 16" fill="none" stroke="#555" stroke-width="1.300"><circle cx="7.700" cy="7.700" r="7" stroke-width="1.100"/><path d="M4 7.700 H11.400"/></svg>
<div class="abs" style="left:865px;top:22px;width:87px;height:1px;background:#eceeef"></div>
<div class="abs" style="left:856px;top:18px;width:9.500px;height:9.500px;border-radius:50%;border:1.500px solid #2f78e2;background:#fff"></div>
<svg style="left:964.8px;top:16px" width="16" height="16" viewBox="0 0 16 16" fill="none" stroke="#555" stroke-width="1.300"><circle cx="7.700" cy="7.700" r="7" stroke-width="1.100"/><path d="M4 7.700 H11.400 M7.700 4 V11.400"/></svg>
<div class="abs" style="left:0px;top:47px;width:994px;height:1px;background:#e3e6e9"></div>
<div class="abs" style="left:0px;top:77px;width:990px;height:1px;background:#d9dce0"></div>
<div class="abs" style="left:200px;top:48px;width:1px;height:186px;background:#d9dce0"></div>
<div class="abs" style="left:989px;top:48px;width:1px;height:186px;background:#dfe2e5"></div>
<div class="abs" style="left:990px;top:48px;width:4px;height:186px;background:#f4f5f6"></div>
<div class="abs" style="left:992px;top:170px;width:2px;height:44px;background:#bfc1c3"></div>
<svg style="left:10px;top:56px" width="14" height="12" viewBox="0 0 14 12" fill="none" stroke="#666" stroke-width="1.100"><path d="M0.600 2 V11.400 H13.400 V2.800 H7 L5.500 0.600 H0.600Z" stroke-linejoin="round"/><path d="M3.500 7 H9.500 M7.500 4.800 L9.700 7 L7.500 9.200"/></svg>
<svg style="left:36px;top:56px" width="14" height="13" viewBox="0 0 14 13" fill="none" stroke="#666" stroke-width="1.100"><path d="M8 11.400 H0.600 V0.600 H5.500 L7 2.800 H13.400 V7" stroke-linejoin="round"/><path d="M8.500 10.500 H13.500 M11 8 V13"/></svg>
<svg style="left:63px;top:55px" width="10" height="14" viewBox="0 0 10 14" fill="none" stroke="#666" stroke-width="1.100"><path d="M0.500 0.600 H9.500 M5 2.500 V13 M1.300 9.300 L5 13 L8.700 9.300"/></svg>
<svg style="left:88px;top:55px" width="10" height="14" viewBox="0 0 10 14" fill="none" stroke="#666" stroke-width="1.100"><path d="M0.500 13.400 H9.500 M5 11.500 V1 M1.300 4.700 L5 1 L8.700 4.700"/></svg>
<svg style="left:120px;top:56px" width="11" height="13" viewBox="0 0 11 13" fill="none" stroke="#666" stroke-width="1.100"><path d="M0.500 2.600 H10.500 M3.500 2.400 V0.600 H7.500 V2.400"/><rect x="1.600" y="2.600" width="7.800" height="9.800" rx="1"/><path d="M4.200 5 V10 M6.800 5 V10"/></svg>
<svg style="left:149.5px;top:56px" width="9" height="12" viewBox="0 0 9 12" ><rect x="0" y="5" width="9" height="7" rx=".8" fill="#767a8a"/><path d="M2 5 V3.500 A2.500 2.500 0 0 1 7 3.500 V5" fill="none" stroke="#767a8a" stroke-width="1.300"/></svg>
<svg style="left:175px;top:57px" width="14" height="10" viewBox="0 0 14 10" ><path d="M0.300 5 Q7 -3.500 13.700 5 Q7 13.500 0.300 5Z" fill="#767a8a"/><circle cx="7" cy="5" r="2.700" fill="#fafcfc"/><circle cx="7" cy="5" r="1.500" fill="#767a8a"/></svg>
<svg style="left:200px;top:48px" width="790" height="30" viewBox="0 0 790 30"><path d="M0.5 19 V29 M16.3 25 V29 M32.1 25 V29 M47.9 25 V29 M63.7 25 V29 M79.5 19 V29 M95.3 25 V29 M111.1 25 V29 M126.9 25 V29 M142.7 25 V29 M158.5 19 V29 M174.3 25 V29 M190.1 25 V29 M205.9 25 V29 M221.7 25 V29 M237.5 19 V29 M253.3 25 V29 M269.1 25 V29 M284.9 25 V29 M300.7 25 V29 M316.5 19 V29 M332.3 25 V29 M348.1 25 V29 M363.9 25 V29 M379.7 25 V29 M395.5 19 V29 M411.3 25 V29 M427.1 25 V29 M442.9 25 V29 M458.7 25 V29 M474.5 19 V29 M490.3 25 V29 M506.1 25 V29 M521.9 25 V29 M537.7 25 V29 M553.5 19 V29 M569.3 25 V29 M585.1 25 V29 M600.9 25 V29 M616.7 25 V29 M632.5 19 V29 M648.3 25 V29 M664.1 25 V29 M679.9 25 V29 M695.7 25 V29 M711.5 19 V29 M727.3 25 V29 M743.1 25 V29 M758.9 25 V29 M774.7 25 V29 M790.5 19 V29 " stroke="#c9ccd0" stroke-width="1"/><text x="5" y="12.500" font-family="Liberation Serif, serif" font-size="12.500" fill="#333">0s</text><text x="79.5" y="12.500" text-anchor="middle" font-family="Liberation Serif, serif" font-size="12.500" fill="#333">1s</text><text x="158.5" y="12.500" text-anchor="middle" font-family="Liberation Serif, serif" font-size="12.500" fill="#333">2s</text><text x="237.5" y="12.500" text-anchor="middle" font-family="Liberation Serif, serif" font-size="12.500" fill="#333">3s</text><text x="316.5" y="12.500" text-anchor="middle" font-family="Liberation Serif, serif" font-size="12.500" fill="#333">4s</text><text x="395.5" y="12.500" text-anchor="middle" font-family="Liberation Serif, serif" font-size="12.500" fill="#333">5s</text><text x="474.5" y="12.500" text-anchor="middle" font-family="Liberation Serif, serif" font-size="12.500" fill="#333">6s</text><text x="553.5" y="12.500" text-anchor="middle" font-family="Liberation Serif, serif" font-size="12.500" fill="#333">7s</text><text x="632.5" y="12.500" text-anchor="middle" font-family="Liberation Serif, serif" font-size="12.500" fill="#333">8s</text><text x="711.5" y="12.500" text-anchor="middle" font-family="Liberation Serif, serif" font-size="12.500" fill="#333">9s</text><text x="778" y="12.500" text-anchor="end" font-family="Liberation Serif, serif" font-size="12.500" fill="#333">10s</text></svg>
<div class="abs" style="left:0px;top:78px;width:990px;height:28px;background:#eeeff4"></div>
<div class="abs" style="left:0px;top:192px;width:990px;height:28px;background:#dce8f9"></div>
<div class="abs" style="left:201px;top:192.500px;width:181px;height:25.500px;background:#fdeee0"></div>
<div class="abs" style="left:0px;top:106px;width:990px;height:1px;background:#dcdfe3"></div>
<div class="abs" style="left:0px;top:134px;width:990px;height:1px;background:#dcdfe3"></div>
<div class="abs" style="left:0px;top:163px;width:990px;height:1px;background:#dcdfe3"></div>
<div class="abs" style="left:0px;top:191px;width:990px;height:1px;background:#dcdfe3"></div>
<div class="abs" style="left:0px;top:220px;width:990px;height:1px;background:#dcdfe3"></div>
<svg style="left:6px;top:86px" width="18" height="12" viewBox="0 0 18 12" ><rect x="0.500" y="0.500" width="13" height="11" rx="1" fill="#c9cccc" stroke="#8a8e8e" stroke-width="1"/><path d="M13.500 4.500 L17.500 1.500 V10.500 L13.500 7.500" fill="none" stroke="#8a8e8e" stroke-width="1"/></svg>
<div class="t" style="left:37px;top:85px;color:#333;font-size:12px">镜头</div>
<svg style="left:116px;top:84px" width="16" height="16" viewBox="0 0 16 16" ><circle cx="8" cy="8" r="8" fill="#1a6fd8"/><text x="8" y="12.600" text-anchor="middle" font-family="Liberation Sans, sans-serif" font-weight="bold" font-size="13" fill="#fff">?</text></svg>
<div class="abs" style="left:146.5px;top:90px;width:4px;height:4px;border-radius:50%;background:#6b6b6b"></div>
<div class="abs" style="left:174.5px;top:90px;width:4px;height:4px;border-radius:50%;background:#6b6b6b"></div>
<div class="abs" style="left:146.5px;top:118px;width:4px;height:4px;border-radius:50%;background:#6b6b6b"></div>
<div class="abs" style="left:174.5px;top:118px;width:4px;height:4px;border-radius:50%;background:#6b6b6b"></div>
<div class="abs" style="left:146.5px;top:146.5px;width:4px;height:4px;border-radius:50%;background:#6b6b6b"></div>
<div class="abs" style="left:174.5px;top:146.5px;width:4px;height:4px;border-radius:50%;background:#6b6b6b"></div>
<div class="abs" style="left:146.5px;top:175px;width:4px;height:4px;border-radius:50%;background:#6b6b6b"></div>
<div class="abs" style="left:174.5px;top:175px;width:4px;height:4px;border-radius:50%;background:#6b6b6b"></div>
<div class="abs" style="left:146.5px;top:204px;width:4px;height:4px;border-radius:50%;background:#6b6b6b"></div>
<div class="abs" style="left:174.5px;top:204px;width:4px;height:4px;border-radius:50%;background:#6b6b6b"></div>
<svg style="left:28px;top:113.5px" width="15" height="13" viewBox="0 0 15 13" ><rect x="0.600" y="0.600" width="13.800" height="11.800" rx="1" fill="#fafcfc" stroke="#7a7f95" stroke-width="1.200"/><path d="M2.500 10 L5.500 6 L7.500 8.500 L9 7 L12 10Z" fill="#7a7f95"/><path d="M10.500 2.500 V5.500 M9 4 H12" stroke="#7a7f95" stroke-width=".9"/></svg>
<div class="t" style="left:57.5px;top:112.5px;color:#333;font-size:12px">山4</div>
<svg style="left:28px;top:142.0px" width="15" height="13" viewBox="0 0 15 13" ><rect x="0.600" y="0.600" width="13.800" height="11.800" rx="1" fill="#fafcfc" stroke="#7a7f95" stroke-width="1.200"/><path d="M2.500 10 L5.500 6 L7.500 8.500 L9 7 L12 10Z" fill="#7a7f95"/><path d="M10.500 2.500 V5.500 M9 4 H12" stroke="#7a7f95" stroke-width=".9"/></svg>
<div class="t" style="left:57.5px;top:141.0px;color:#333;font-size:12px">山3</div>
<svg style="left:28px;top:170.5px" width="15" height="13" viewBox="0 0 15 13" ><rect x="0.600" y="0.600" width="13.800" height="11.800" rx="1" fill="#fafcfc" stroke="#7a7f95" stroke-width="1.200"/><path d="M2.500 10 L5.500 6 L7.500 8.500 L9 7 L12 10Z" fill="#7a7f95"/><path d="M10.500 2.500 V5.500 M9 4 H12" stroke="#7a7f95" stroke-width=".9"/></svg>
<div class="t" style="left:57.5px;top:169.5px;color:#333;font-size:12px">山5</div>
<svg style="left:28px;top:199.5px" width="15" height="13" viewBox="0 0 15 13" ><rect x="0.600" y="0.600" width="13.800" height="11.800" rx="1" fill="#fafcfc" stroke="#7a7f95" stroke-width="1.200"/><path d="M2.500 10 L5.500 6 L7.500 8.500 L9 7 L12 10Z" fill="#7a7f95"/><path d="M10.500 2.500 V5.500 M9 4 H12" stroke="#7a7f95" stroke-width=".9"/></svg>
<div class="t" style="left:57.5px;top:198.5px;color:#333;font-size:12px">背景</div>
<div class="blk" style="left:201px;top:80px;width:79px;height:24px;line-height:26px;background:#589be6;border-radius:0 4px 4px 0;font-weight:500;padding-left:2px">默认镜头</div>
<svg style="left:306px;top:83px" width="18" height="18" viewBox="0 0 18 18" ><path d="M9 0.600 L17.400 9 L9 17.400 L0.600 9Z" fill="#5ec46e" stroke="#52a05f" stroke-width="1"/><path d="M9 5.100 V12.900 M5.100 9 H12.900" stroke="#fff" stroke-width="2.100"/></svg>
<div class="blk" style="left:201px;top:107px;width:62px;background:linear-gradient(to bottom right,#6499d0 49.500%,#65afe5 50.500%);padding-left:4px">无</div>
<div class="blk" style="left:342px;top:107px;width:40px;background:linear-gradient(to bottom left,#6499d0 49.500%,#65afe5 50.500%);border-radius:2px;text-align:left;padding-left:4px">一直显示</div>
<div class="blk" style="left:201px;top:136px;width:62px;background:linear-gradient(to bottom right,#6499d0 49.500%,#65afe5 50.500%);padding-left:4px">无</div>
<div class="blk" style="left:342px;top:136px;width:40px;background:linear-gradient(to bottom left,#6499d0 49.500%,#65afe5 50.500%);border-radius:2px;text-align:left;padding-left:4px">一直显示</div>
<div class="blk" style="left:201px;top:165px;width:62px;background:linear-gradient(to bottom right,#6499d0 49.500%,#65afe5 50.500%);padding-left:4px">无</div>
<div class="blk" style="left:342px;top:165px;width:40px;background:linear-gradient(to bottom left,#6499d0 49.500%,#65afe5 50.500%);border-radius:2px;text-align:left;padding-left:4px">一直显示</div>
<div class="blk" style="left:201px;top:194px;width:62px;background:linear-gradient(to bottom right,#6499d0 49.500%,#65afe5 50.500%);padding-left:4px">无</div>
<div class="blk" style="left:342px;top:194px;width:40px;background:linear-gradient(to bottom left,#6499d0 49.500%,#65afe5 50.500%);border-radius:2px;text-align:left;padding-left:4px">一直显示</div>
<svg style="left:290px;top:110px" width="18" height="18" viewBox="0 0 18 18" ><path d="M9 0.600 L17.400 9 L9 17.400 L0.600 9Z" fill="#5ec46e" stroke="#52a05f" stroke-width="1"/><path d="M9 5.100 V12.900 M5.100 9 H12.900" stroke="#fff" stroke-width="2.100"/></svg>
<svg style="left:290px;top:139px" width="18" height="18" viewBox="0 0 18 18" ><path d="M9 0.600 L17.400 9 L9 17.400 L0.600 9Z" fill="#5ec46e" stroke="#52a05f" stroke-width="1"/><path d="M9 5.100 V12.900 M5.100 9 H12.900" stroke="#fff" stroke-width="2.100"/></svg>
<svg style="left:290px;top:168px" width="18" height="18" viewBox="0 0 18 18" ><path d="M9 0.600 L17.400 9 L9 17.400 L0.600 9Z" fill="#5ec46e" stroke="#52a05f" stroke-width="1"/><path d="M9 5.100 V12.900 M5.100 9 H12.900" stroke="#fff" stroke-width="2.100"/></svg>
<div class="blk" style="left:263px;top:194px;width:40px;height:24px;background:#4b93e6;border:1px solid #3d84d8;border-radius:3px;font-weight:500;line-height:25px">躺平</div>
<svg style="left:313.5px;top:197px" width="18" height="18" viewBox="0 0 18 18" ><path d="M9 0.600 L17.400 9 L9 17.400 L0.600 9Z" fill="#5ec46e" stroke="#52a05f" stroke-width="1"/><path d="M9 5.100 V12.900 M5.100 9 H12.900" stroke="#fff" stroke-width="2.100"/></svg>
<svg style="left:200.7px;top:55px" width="9" height="23" viewBox="0 0 9 23"><path d="M0.500 0.500 H7 Q8.500 0.500 8.500 2 V13.500 L0.500 21.500Z" fill="#4a8fe6" stroke="#2566c8" stroke-width="1"/><path d="M3.500 5 V11.500" stroke="#17459a" stroke-width="1.200"/></svg>
<div class="t" style="left:-2px;top:226px;color:#333;font-size:12.300px">当前场景: 01&nbsp;&nbsp;&nbsp;未命名</div>
<svg style="left:175px;top:225px" width="14" height="12" viewBox="0 0 14 12" ><path d="M0.600 0.600 H7.500 V11 M0.600 0.600 V11 M2.500 3 H5.500 M2.500 5.500 H5.500 M2.500 8 H5.500 M9 3.500 H13 V11 M10.500 6 H11.500 M10.500 8.500 H11.500" fill="none" stroke="#555" stroke-width="1.100"/></svg>
<div class="abs" style="left:503px;top:43px;width:407px;height:33px;background:rgba(255,255,255,.95);border-radius:6px;box-shadow:0 0 0 2.500px rgba(120,125,130,.13),0 1px 4px 2px rgba(0,0,0,.07)"></div>
<div class="t" style="left:510.5px;top:53px;color:#222;font-size:12px">从当前位置播放单场景<span class="ls">([Space]</span>单场景播放<span class="ls">/[Ctrl+Alt+Space]</span>全场景播放<span class="ls">)</span></div>
<svg style="left:501px;top:21px" width="18" height="24" viewBox="0 0 18 24" ><path d="M5.500 13.500 V3 Q5.500 1.200 7 1.200 Q8.500 1.200 8.500 3 V9.500 V8.500 Q8.500 7.200 10 7.200 Q11.300 7.200 11.300 8.800 V10 V9.500 Q11.300 8.300 12.700 8.300 Q14 8.300 14 9.800 V11 V10.600 Q14 9.500 15.300 9.500 Q16.700 9.500 16.700 11 V16 Q16.700 19 15 21 V23.300 H7.500 V21 Q5 18.500 2.800 15.500 Q1.500 13.800 2.800 12.800 Q4 12 5.500 13.500Z" fill="#fff" stroke="#111" stroke-width="1.100" stroke-linejoin="round"/><path d="M9 14 V18.500 M11.500 14 V18.500 M14 14 V18.500" stroke="#111" stroke-width=".9"/></svg>
</div>
</body>
</html>
